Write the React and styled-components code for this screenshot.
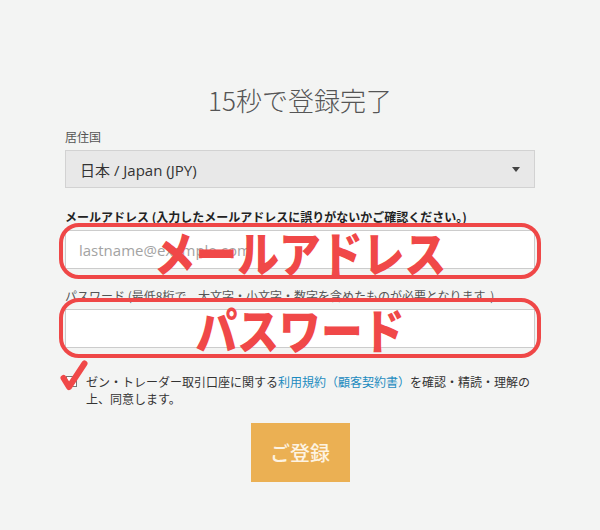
import React from "react";
import styled, { createGlobalStyle } from "styled-components";

const GlobalStyle = createGlobalStyle`
  html, body {
    margin: 0;
    padding: 0;
    background: #f3f4f3;
  }
  body {
    font-family: "Open Sans", "Noto Sans CJK JP", sans-serif;
    color: #333333;
  }
`;

const Page = styled.div`
  width: 600px;
  height: 530px;
  box-sizing: border-box;
  padding-top: 80px;
  background: #f3f4f3;
`;

const Form = styled.div`
  width: 470px;
  margin: 0 auto;
  display: flex;
  flex-direction: column;
`;

const Title = styled.h1`
  margin: 0 0 8px;
  font-size: 26px;
  line-height: 40px;
  font-weight: 300;
  color: #555555;
  text-align: center;
  font-family: "Noto Sans CJK JP", sans-serif;
`;

const Label = styled.label`
  display: block;
  font-size: 12px;
  line-height: 18px;
  margin-top: ${(p) => p.$top || 0}px;
  margin-bottom: 4px;
  font-weight: ${(p) => (p.$bold ? 700 : 400)};
  color: ${(p) => (p.$bold ? "#222222" : "#555555")};
  font-family: "Noto Sans CJK JP", sans-serif;
`;

const Select = styled.div`
  position: relative;
  height: 38px;
  box-sizing: border-box;
  border: 1px solid #d2d2d2;
  background: #e8e8e8;
  display: flex;
  align-items: center;
  padding: 0 14px;
  font-size: 15px;
  color: #333333;
`;

const Caret = styled.span`
  margin-left: auto;
  width: 0;
  height: 0;
  border-left: 4px solid transparent;
  border-right: 4px solid transparent;
  border-top: 5px solid #444444;
`;

const Field = styled.div`
  position: relative;
`;

const Input = styled.input`
  display: block;
  width: 100%;
  height: 39px;
  box-sizing: border-box;
  border: 1px solid #cccccc;
  background: #ffffff;
  padding: 0 13px;
  font-size: 15px;
  font-family: "Open Sans", "Noto Sans CJK JP", sans-serif;
  color: #333333;
  outline: none;
  &::placeholder {
    color: #a3a3a3;
  }
`;

const Highlight = styled.div`
  position: absolute;
  left: -6px;
  right: -6px;
  top: ${(p) => p.$top}px;
  bottom: -10px;
  border: 4px solid #ef4747;
  border-radius: 20px;
  display: flex;
  align-items: center;
  justify-content: center;
  pointer-events: none;
`;

const Stamp = styled.span`
  display: inline-block;
  font-family: "Noto Sans CJK JP", sans-serif;
  font-weight: 900;
  font-size: 48px;
  line-height: 1;
  color: #f04848;
  transform: scaleX(0.87);
  white-space: nowrap;
`;

const Agree = styled.div`
  position: relative;
  margin-top: 25px;
  display: flex;
  align-items: flex-start;
  font-size: 12px;
  line-height: 17px;
  font-family: "Noto Sans CJK JP", sans-serif;
  color: #333333;
`;

const Box = styled.span`
  flex: none;
  width: 11px;
  height: 11px;
  margin: 3px 9px 0 1px;
  border: 1px solid #777777;
  background: #ffffff;
  box-sizing: border-box;
`;

const Link = styled.a`
  color: #1c8bbf;
  text-decoration: none;
`;

// hand-drawn red tick over the checkbox
const Check = styled.svg`
  position: absolute;
  left: -5px;
  top: -14px;
  pointer-events: none;
`;

const Submit = styled.button`
  align-self: center;
  margin-top: 16px;
  width: 99px;
  height: 59px;
  border: none;
  background: #ebb053;
  color: #fdf3e2;
  font-size: 20px;
  font-weight: 500;
  font-family: "Noto Sans CJK JP", sans-serif;
  cursor: pointer;
`;

export default function App() {
  return (
    <>
      <GlobalStyle />
      <Page>
        <Form>
          <Title>15秒で登録完了</Title>

          <Label>居住国</Label>
          <Select>
            日本 / Japan (JPY)
            <Caret />
          </Select>

          <Label $bold $top={20}>
            メールアドレス (入力したメールアドレスに誤りがないかご確認ください。)
          </Label>
          <Field>
            <Input type="email" placeholder="lastname@example.com" />
            <Highlight $top={-7}>
              <Stamp>メールアドレス</Stamp>
            </Highlight>
          </Field>

          <Label $top={18}>パスワード (最低8桁で、大文字・小文字・数字を含めたものが必要となります。)</Label>
          <Field>
            <Input type="password" />
            <Highlight $top={-11}>
              <Stamp>パスワード</Stamp>
            </Highlight>
          </Field>

          <Agree>
            <Box />
            <span>
              ゼン・トレーダー取引口座に関する<Link href="#">利用規約（顧客契約書）</Link>を確認・精読・理解の上、同意します。
            </span>
            <Check width="28" height="32" viewBox="0 0 28 32">
              <path d="M3.5 19 L9 28 L24.5 4.5" fill="none" stroke="#f04848" strokeWidth="6" strokeLinecap="round" strokeLinejoin="round" />
            </Check>
          </Agree>

          <Submit>ご登録</Submit>
        </Form>
      </Page>
    </>
  );
}
